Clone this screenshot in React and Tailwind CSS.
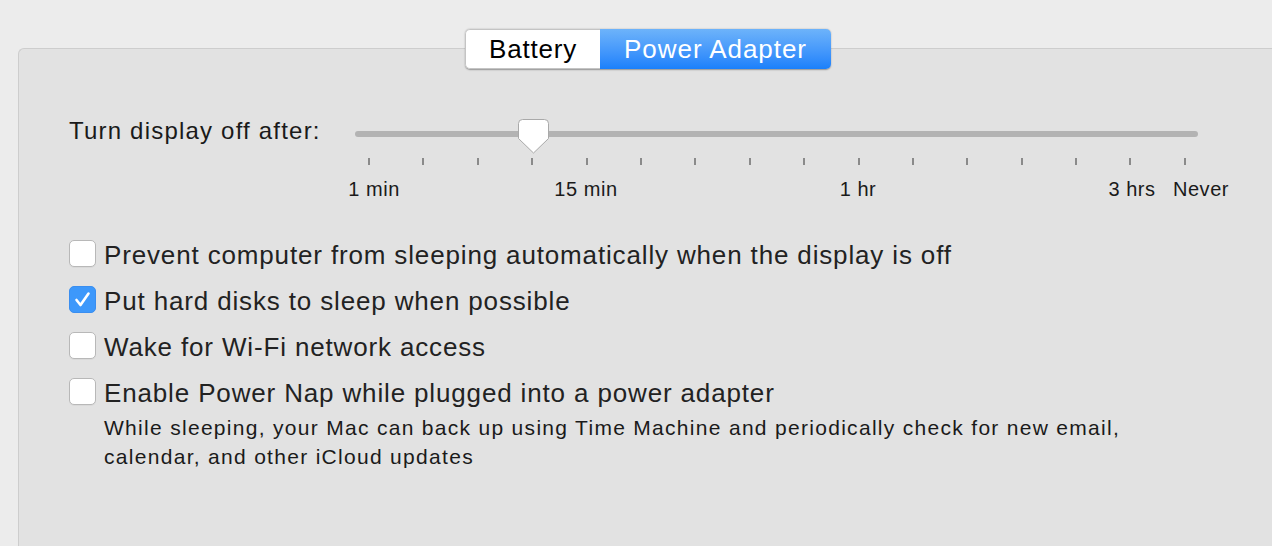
import React from "react";

const font = { fontFamily: '"Liberation Sans", Arial, sans-serif' };

function Checkbox({ checked }) {
  if (checked) {
    return (
      <div className="w-[27px] h-[27px] shrink-0 rounded-[5px] bg-[#3d98fb] border border-[#3a8ef0] flex items-center justify-center">
        <svg width="17" height="17" viewBox="0 0 17 17">
          <path d="M2.5 9 L6.5 14 L14.5 2.5" fill="none" stroke="white" strokeWidth="2.6" strokeLinecap="round" strokeLinejoin="round" />
        </svg>
      </div>
    );
  }
  return <div className="w-[27px] h-[27px] shrink-0 rounded-[5px] bg-white border border-[#b8b8b8] shadow-[0_1px_0_rgba(0,0,0,0.04)]" />;
}

function Row({ checked, children }) {
  return (
    <div className="flex items-center gap-[8px] h-[46px]">
      <Checkbox checked={checked} />
      <span className="text-[26px] tracking-[0.85px] leading-[30px] text-[#222] pt-[3px]">{children}</span>
    </div>
  );
}

export default function App() {
  const ticks = Array.from({ length: 16 });
  return (
    <div style={font} className="w-[1272px] h-[546px] bg-[#ececec] overflow-hidden pt-[48px] pl-[18px]">
      <div className="h-[520px] bg-[#e2e2e2] border-t border-l border-[#cdcdcd] rounded-tl-[6px] flex flex-col">
        <div className="flex justify-center pl-[5px] -mt-[20px]">
          <div className="flex h-[40px] rounded-[5px] overflow-hidden shadow-[0_0.5px_1.5px_rgba(0,0,0,0.35)]">
            <div className="w-[135px] bg-white flex items-center justify-center text-[26px] tracking-[0.8px] text-black border border-r-0 border-[#c4c4c4] rounded-l-[5px]">Battery</div>
            <div className="w-[231px] bg-gradient-to-b from-[#6db3fa] to-[#1a80fb] flex items-center justify-center text-[26px] tracking-[0.95px] text-white">Power Adapter</div>
          </div>
        </div>

        <div className="flex items-start pl-[50px] mt-[52px]">
          <div className="text-[24px] tracking-[1.2px] text-[#1a1a1a] leading-[26px] w-[286px] -mt-[3px] whitespace-nowrap">Turn display off after:</div>
          <div className="relative w-[843px] h-[80px]">
            <div className="mt-[10px] h-[6px] rounded-full bg-[#b3b3b3]" />
            <div className="flex justify-between pl-[13px] pr-[12px] mt-[21px]">
              {ticks.map((_, i) => (
                <div key={i} className="w-[2px] h-[7px] bg-[#8a8a8a]" />
              ))}
            </div>
            <div className="absolute left-[163px] top-[-2px]">
              <svg width="31" height="35" viewBox="0 0 31 35">
                <path d="M4.5 0.5 H26.5 A4 4 0 0 1 30.5 4.5 V19.5 L15.5 34 L0.5 19.5 V4.5 A4 4 0 0 1 4.5 0.5 Z" fill="white" stroke="#a9a9a9" strokeWidth="1" />
              </svg>
            </div>
            <div className="absolute top-[57px] left-0 right-0 text-[20px] tracking-[0.55px] text-[#1a1a1a] leading-[22px]">
              <span className="absolute left-[19px] -translate-x-1/2 whitespace-nowrap">1 min</span>
              <span className="absolute left-[231px] -translate-x-1/2 whitespace-nowrap">15 min</span>
              <span className="absolute left-[503px] -translate-x-1/2 whitespace-nowrap">1 hr</span>
              <span className="absolute left-[777px] -translate-x-1/2 whitespace-nowrap">3 hrs</span>
              <span className="absolute left-[846px] -translate-x-1/2 whitespace-nowrap">Never</span>
            </div>
          </div>
        </div>

        <div className="flex flex-col pl-[50px] mt-[29px]">
          <Row>Prevent computer from sleeping automatically when the display is off</Row>
          <Row checked>Put hard disks to sleep when possible</Row>
          <Row>Wake for Wi-Fi network access</Row>
          <Row>Enable Power Nap while plugged into a power adapter</Row>
          <div className="pl-[35px] text-[21px] tracking-[1.3px] leading-[29px] text-[#1a1a1a] -mt-[1px] whitespace-nowrap">
            While sleeping, your Mac can back up using Time Machine and periodically check for new email,
            <br />
            calendar, and other iCloud updates
          </div>
        </div>
      </div>
    </div>
  );
}
